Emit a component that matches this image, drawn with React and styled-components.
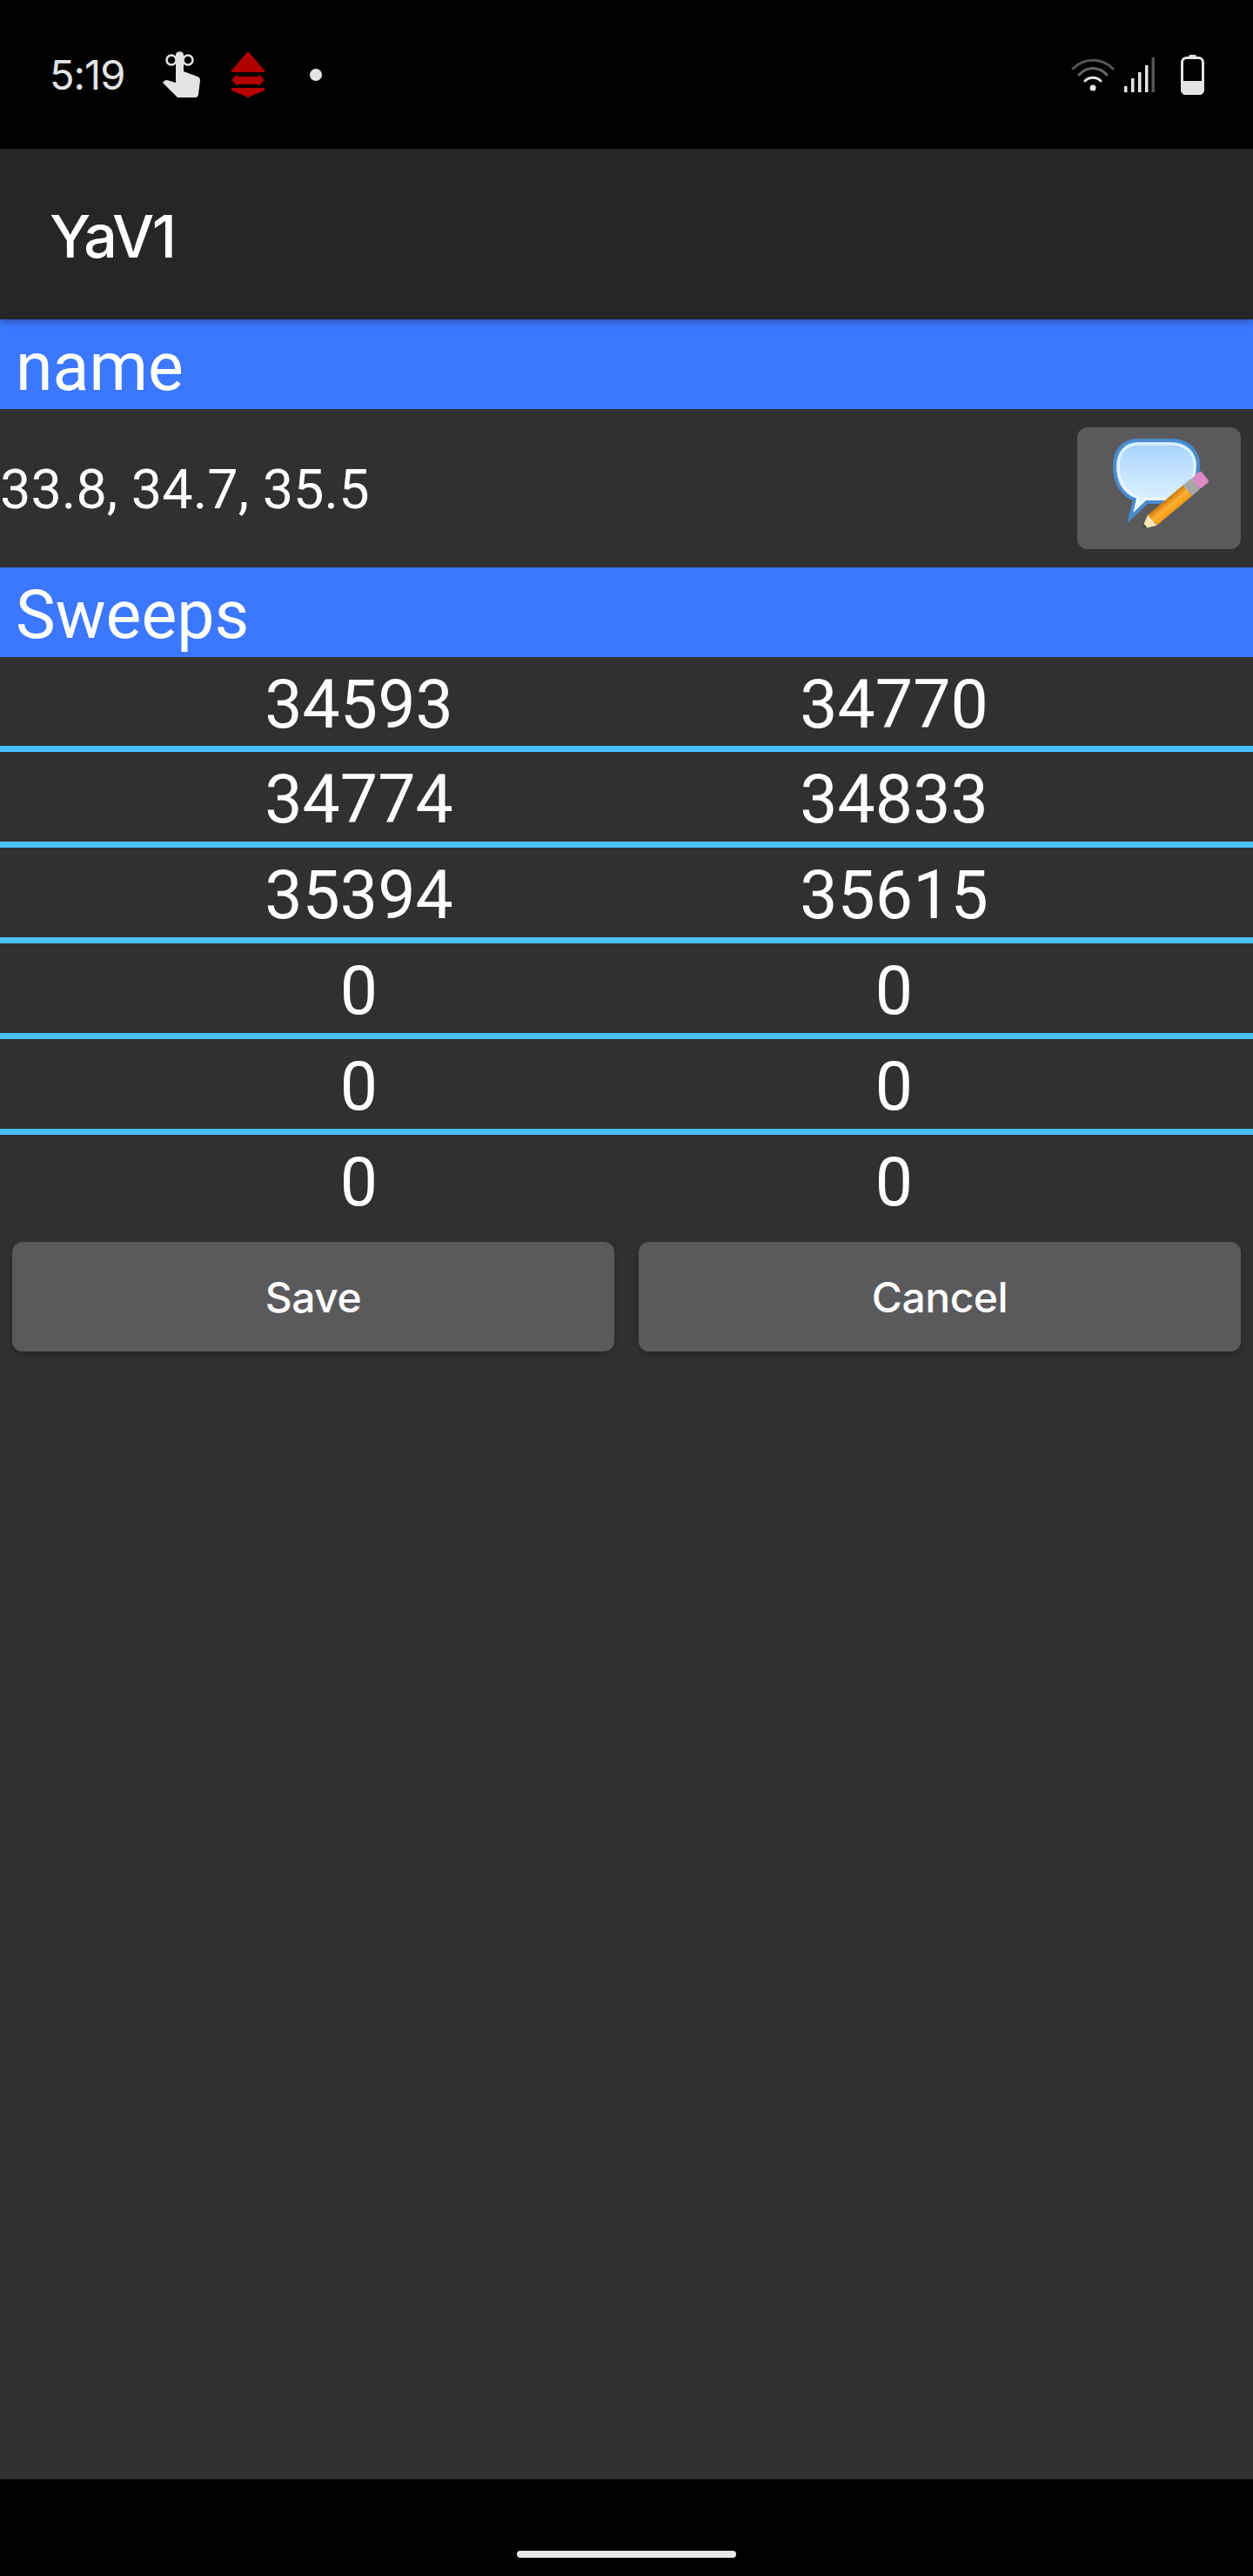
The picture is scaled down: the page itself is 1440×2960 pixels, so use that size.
import styled, { createGlobalStyle } from "styled-components";

const GlobalStyle = createGlobalStyle`
  html, body {
    margin: 0;
    padding: 0;
    background: #000;
  }
`;

const Screen = styled.div`
  display: flex;
  flex-direction: column;
  width: 1440px;
  height: 2960px;
  background: #303030;
  color: #fff;
  font-family: Roboto, sans-serif;
`;

const StatusBar = styled.div`
  display: flex;
  align-items: center;
  justify-content: space-between;
  height: 171px;
  flex: none;
  padding: 0 56px 0 57px;
  box-sizing: border-box;
  background: #000;
  color: #e4e4e4;
`;

const StatusGroup = styled.div`
  display: flex;
  align-items: center;
`;

const Clock = styled.span`
  font-family: Inter, sans-serif;
  font-size: 47px;
  line-height: 60px;
  width: 130px;
  letter-spacing: -1px;
`;

const Toolbar = styled.div`
  position: relative;
  z-index: 1;
  display: flex;
  align-items: center;
  height: 196px;
  flex: none;
  padding: 4px 0 0 57px;
  box-sizing: border-box;
  background: #262626;
  box-shadow: 0 3px 8px rgba(0, 0, 0, 0.3);
  font-family: Inter, sans-serif;
  font-size: 68px;
  font-weight: 500;
  letter-spacing: -2.5px;
`;

const SectionHeader = styled.div`
  height: 103px;
  flex: none;
  padding-left: 18px;
  background: #3b78ff;
  font-size: 77px;
  line-height: 110px;
`;

const NameRow = styled.div`
  display: flex;
  align-items: center;
  justify-content: space-between;
  height: 182px;
  flex: none;
  padding: 0 14px 0 0;
  box-sizing: border-box;
  font-size: 63px;
`;

const NameText = styled.span`
  padding-top: 3px;
`;

const IconButton = styled.button`
  display: block;
  width: 188px;
  height: 140px;
  padding: 0;
  border: none;
  border-radius: 12px;
  background: #5a5a5c;
`;

const SweepRow = styled.div`
  display: grid;
  grid-template-columns: 1fr 1fr;
  height: ${(p) => (p.$first ? 102 : 103)}px;
  padding: 0 105px;
  border-bottom: ${(p) => (p.$last ? "none" : "7px solid #4ac0ff")};
  font-size: 77px;
  line-height: 110px;
  text-align: center;
`;

const ButtonRow = styled.div`
  display: flex;
  gap: 28px;
  padding: 20px 14px 0;
`;

const ActionButton = styled.button`
  flex: 1;
  height: 126px;
  padding: 0;
  border: none;
  border-radius: 12px;
  background: #5a5a5c;
  box-shadow: 0 3px 6px rgba(0, 0, 0, 0.2);
  color: #fff;
  font-family: Inter, sans-serif;
  font-size: 48px;
  font-weight: 500;
  letter-spacing: -0.5px;
`;

const Spacer = styled.div`
  flex: 1;
`;

const NavBar = styled.div`
  display: flex;
  justify-content: center;
  height: 111px;
  flex: none;
  padding-top: 82px;
  box-sizing: border-box;
  background: #000;
`;

const NavPill = styled.div`
  width: 252px;
  height: 8px;
  border-radius: 4px;
  background: #e8e8e8;
`;

function TouchIcon() {
  return (
    <svg width="44" height="54" viewBox="0 0 44 54" style={{ marginRight: 35 }}>
      <circle cx="10" cy="10" r="5.5" fill="none" stroke="#e4e4e4" strokeWidth="2.5" />
      <circle cx="29" cy="10" r="5.5" fill="none" stroke="#e4e4e4" strokeWidth="2.5" />
      <path d="M0 36 C1 34 3 33 5 33 L15 36 L15 4 C15 -1 24 -1 24 4 L24 23 L40 29 C42 30 43 31 43 34 L41 49 C41 52 39 53 37 53 L17 53 Z" fill="#e4e4e4" />
    </svg>
  );
}

function RadarIcon() {
  return (
    <svg width="39" height="54" viewBox="0 0 39 54" style={{ marginRight: 51 }}>
      <path d="M19 0 L38 22 L38 24 L0 24 L0 22 Z" fill="#b30000" />
      <path d="M0 33 L7 26 L7 29 L31 29 L31 26 L38 33 L31 40 L31 38 L7 38 L7 40 Z" fill="#b30000" />
      <path d="M0 42 H38 V45 L19 53 L0 45 Z" fill="#b30000" />
    </svg>
  );
}

function WifiIcon() {
  return (
    <svg width="50" height="38" viewBox="0 0 50 38" fill="none" strokeLinecap="round" style={{ marginRight: 11 }}>
      <path d="M2 12 C15 -1 35 -1 48 12" stroke="#555" strokeWidth="3" />
      <path d="M9 19 C18 9 32 9 41 19" stroke="#666" strokeWidth="3" />
      <path d="M16 26 C21 21 29 21 34 26" stroke="#e4e4e4" strokeWidth="3" />
      <circle cx="25" cy="34" r="3.5" fill="#e4e4e4" />
    </svg>
  );
}

function SignalIcon() {
  return (
    <svg width="35" height="40" viewBox="0 0 35 40" style={{ marginRight: 30 }}>
      <rect x="0" y="33" width="3.5" height="7" fill="#e4e4e4" />
      <rect x="8" y="24" width="3.5" height="16" fill="#e4e4e4" />
      <rect x="16" y="17" width="3.5" height="23" fill="#e4e4e4" />
      <rect x="24" y="9" width="3.5" height="31" fill="#e4e4e4" />
      <rect x="31.5" y="0" width="3.5" height="40" fill="#555" />
    </svg>
  );
}

function BatteryIcon() {
  return (
    <svg width="27" height="46" viewBox="0 0 27 46">
      <rect x="9" y="0" width="9" height="4" rx="2" fill="#e4e4e4" />
      <rect x="1.5" y="3.5" width="24" height="41" rx="5" fill="none" stroke="#e4e4e4" strokeWidth="3" />
      <path d="M0 30 H27 V40 C27 44 24 46 21 46 H6 C3 46 0 44 0 40 Z" fill="#e4e4e4" />
    </svg>
  );
}

function NoteIcon() {
  return (
    <svg width="188" height="140" viewBox="0 0 188 140">
      <defs>
        <linearGradient id="bubble" x1="0" y1="0" x2="0" y2="1">
          <stop offset="0" stopColor="#a4d3ff" />
          <stop offset="1" stopColor="#eef9ff" />
        </linearGradient>
        <linearGradient id="wood" x1="0" y1="0" x2="0" y2="1">
          <stop offset="0" stopColor="#c97a10" />
          <stop offset="0.5" stopColor="#ffb030" />
          <stop offset="1" stopColor="#f09a18" />
        </linearGradient>
      </defs>
      <path
        d="M70 15 H108 C128 15 139 28 139 44 C139 68 124 86 104 86 H80 L61 104 L66 83 C50 77 43 62 43 45 C43 28 52 15 70 15 Z"
        fill="url(#bubble)"
        stroke="#4a8ccc"
        strokeWidth="4"
      />
      <path
        d="M71 19 H107 C125 19 135 30 135 44 C135 66 122 82 104 82 H78 L67 93 L70 80 C54 74 47 60 47 45 C47 30 55 19 71 19 Z"
        fill="none"
        stroke="#f2fbff"
        strokeOpacity="0.7"
        strokeWidth="3"
      />
      <g transform="translate(74 117) rotate(-40)">
        <path d="M0 0 L6 -2 L6 2 Z" fill="#4a4a3c" />
        <path d="M6 -3 L16 -8 L16 8 L6 3 Z" fill="#ffe9b8" />
        <rect x="16" y="-8" width="53" height="16" fill="url(#wood)" />
        <rect x="69" y="-8" width="12" height="16" fill="#a8a8a8" />
        <rect x="81" y="-8" width="14" height="16" rx="3" fill="#dc8ac4" />
      </g>
    </svg>
  );
}

const sweeps = [
  [34593, 34770],
  [34774, 34833],
  [35394, 35615],
  [0, 0],
  [0, 0],
  [0, 0],
];

export default function App() {
  return (
    <Screen>
      <GlobalStyle />
      <StatusBar>
        <StatusGroup>
          <Clock>5:19</Clock>
          <TouchIcon />
          <RadarIcon />
          <svg width="14" height="14" viewBox="0 0 14 14">
            <circle cx="7" cy="7" r="7" fill="#e4e4e4" />
          </svg>
        </StatusGroup>
        <StatusGroup>
          <WifiIcon />
          <SignalIcon />
          <BatteryIcon />
        </StatusGroup>
      </StatusBar>
      <Toolbar>YaV1</Toolbar>
      <SectionHeader>name</SectionHeader>
      <NameRow>
        <NameText>33.8, 34.7, 35.5</NameText>
        <IconButton>
          <NoteIcon />
        </IconButton>
      </NameRow>
      <SectionHeader>Sweeps</SectionHeader>
      {sweeps.map((row, i) => (
        <SweepRow key={i} $first={i === 0} $last={i === sweeps.length - 1}>
          <span>{row[0]}</span>
          <span>{row[1]}</span>
        </SweepRow>
      ))}
      <ButtonRow>
        <ActionButton>Save</ActionButton>
        <ActionButton>Cancel</ActionButton>
      </ButtonRow>
      <Spacer />
      <NavBar>
        <NavPill />
      </NavBar>
    </Screen>
  );
}
